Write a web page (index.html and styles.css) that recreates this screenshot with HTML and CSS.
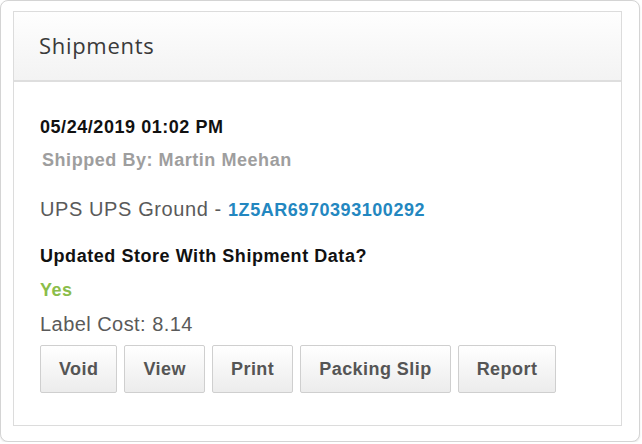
FILE: index.html
```html
<!DOCTYPE html>
<html>
<head>
<meta charset="utf-8">
<link rel="stylesheet" href="styles.css">
</head>
<body>
<div class="frame">
  <div class="panel">
    <div class="panel-header">
      <h2 class="panel-title">Shipments</h2>
    </div>
    <div class="panel-body">
      <p class="date">05/24/2019 01:02 PM</p>
      <p class="shipped-by">Shipped By: Martin Meehan</p>
      <p class="carrier">UPS UPS Ground - <a class="tracking" href="#">1Z5AR6970393100292</a></p>
      <p class="question">Updated Store With Shipment Data?</p>
      <p class="answer">Yes</p>
      <p class="cost">Label Cost: 8.14</p>
      <div class="actions">
        <button class="btn">Void</button>
        <button class="btn">View</button>
        <button class="btn">Print</button>
        <button class="btn">Packing Slip</button>
        <button class="btn">Report</button>
      </div>
    </div>
  </div>
</div>
</body>
</html>
```
FILE: styles.css
```css
* { box-sizing: border-box; }
html, body { margin: 0; padding: 0; background: #ffffff; }
body { font-family: "Liberation Sans", Arial, sans-serif; }

.frame {
  width: 640px;
  height: 442px;
  border: 1px solid #d4d4d4;
  border-radius: 8px;
  box-shadow: 0 1px 2px rgba(0,0,0,0.1);
  padding: 10px 17px 15px 12px;
  background: #fff;
}

.panel {
  border: 1px solid #dcdcdc;
  height: 100%;
  display: flex;
  flex-direction: column;
}

.panel-header {
  height: 70px;
  background: linear-gradient(#fefefe, #f3f3f3);
  border-bottom: 2px solid #dedede;
  display: flex;
  align-items: center;
  padding-left: 25px;
}

.panel-title {
  margin: 0;
  font-family: "Open Sans", sans-serif;
  font-weight: 400;
  font-size: 22px;
  letter-spacing: 0.7px;
  color: #3a3a3a;
  padding-bottom: 2px;
}

.panel-body {
  flex: 1;
  padding: 33px 26px 0 26px;
}

.panel-body p {
  margin: 0;
  line-height: 24px;
  font-size: 18px;
  letter-spacing: 0.55px;
}

.date { font-weight: 700; color: #111; }
.panel-body .shipped-by { font-weight: 700; color: #9e9e9e; margin-top: 9px; padding-left: 2px; }
.panel-body .carrier { font-size: 20px; letter-spacing: 0.6px; color: #5a5a5a; margin-top: 25px; }
.tracking { font-weight: 700; color: #2387c0; text-decoration: none; font-size: 18px; letter-spacing: 0.55px; }
.panel-body .question { font-weight: 700; color: #111; margin-top: 22px; }
.panel-body .answer { font-weight: 700; color: #8bbd4a; margin-top: 10px; }
.panel-body .cost { font-size: 20px; letter-spacing: 0.45px; color: #5a5a5a; margin-top: 10px; }

.actions {
  display: flex;
  gap: 7px;
  margin-top: 9px;
}

.btn {
  height: 48px;
  padding: 0 18px;
  border: 1px solid #cfcfcf;
  border-radius: 2px;
  background: linear-gradient(#ffffff, #ececec);
  font-family: "Liberation Sans", Arial, sans-serif;
  font-weight: 700;
  font-size: 18px;
  letter-spacing: 0.45px;
  color: #555;
  cursor: pointer;
}
```
